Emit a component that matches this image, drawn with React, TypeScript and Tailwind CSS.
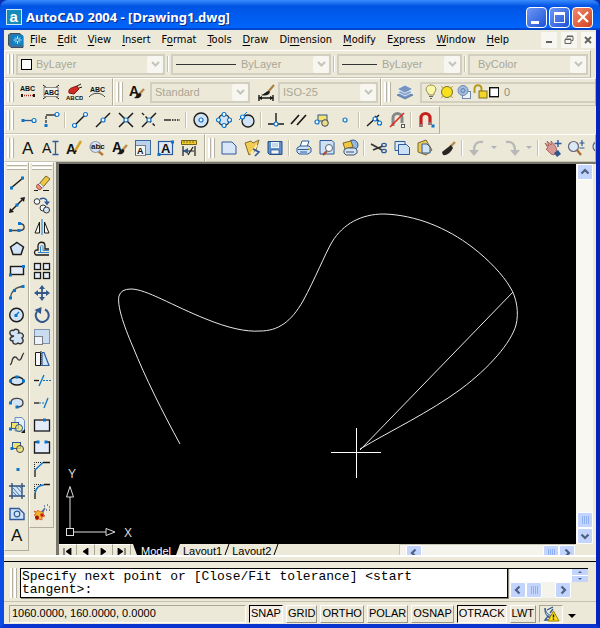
import type { ReactNode } from "react";

const INK = "#1a1a1a";
const BLUE = "#0b74cc";
const NAVY = "#2c5a9a";
const PALE = "#d3e3f6";

const Dot = ({ x, y }: { x: number; y: number }) => (
    <rect x={x - 1.5} y={y - 1.5} width="3" height="3" fill={BLUE} />
);

const Ring = ({ x, y }: { x: number; y: number }) => (
    <circle cx={x} cy={y} r="2" fill="#fff" stroke={BLUE} strokeWidth="1.2" />
);

const Glyph = ({ x, y, size, children, bold = false }: { x: number; y: number; size: number; children: string; bold?: boolean }) => (
    <text x={x} y={y} fontSize={size} fontWeight={bold ? 700 : 400} fill="#111" stroke="none" fontFamily="'Liberation Sans', sans-serif">
        {children}
    </text>
);

const Brush = () => (
    <>
        <path d="M16 6 11.5 11" stroke="#b98a4b" strokeWidth="2.4" />
        <path d="M12 10c-3 0-3 3-6 5 3 1 7 0 7.500-3.500z" fill={INK} stroke="none" />
    </>
);

const Printer = () => (
    <>
        <path d="M5 8 7 2h7l-2 6" fill="#fff" stroke={NAVY} />
        <path d="M2 9l3-2h9l2 2v4l-3 2H4l-2-2z" fill={PALE} stroke={NAVY} />
        <path d="M3 10.500h11M5 13h7" stroke={NAVY} />
        <circle cx="14" cy="10" r=".9" fill="#d8a414" stroke="none" />
    </>
);

const icons: Record<string, ReactNode> = {
    // drawing tools
    Line: <><path d="M3 14 15 4" stroke={INK} strokeWidth="1.5" /><Dot x={3.500} y={14} /><Dot x={14.500} y={4} /></>,
    "Construction line": <><path d="M3 15 15 3" stroke={INK} strokeWidth="1.4" /><path d="m1 17 1-5 4 4zM17 1l-5 1 4 4z" fill={INK} stroke="none" /><Dot x={9} y={9} /></>,
    Polyline: <><path d="M3 12.500h9c5 0 6-6 0-7" stroke="#444" strokeWidth="1.4" /><Dot x={2.500} y={12.500} /><Dot x={11} y={12.500} /><Dot x={11.500} y={5.500} /></>,
    Polygon: <path d="M9 2.500 15.500 7 13 14.500H5L2.500 7z" fill={PALE} stroke={INK} strokeWidth="1.5" />,
    Rectangle: <><rect x="2.500" y="4.500" width="13" height="8" fill="#e3ecf8" stroke={INK} strokeWidth="1.4" /><Dot x={15.500} y={4.500} /><Dot x={2.500} y={13} /></>,
    Arc: <><path d="M2.500 14C3 7 8 3 15 2.500" stroke="#555" strokeWidth="1.4" /><Dot x={2.500} y={14} /><Dot x={6.500} y={6.500} /><Dot x={15} y={2.500} /></>,
    Circle: <><circle cx="8.500" cy="9" r="6.800" fill={PALE} stroke={INK} strokeWidth="1.4" /><path d="m8 9 3-3" stroke={BLUE} strokeWidth="1.3" /><Dot x={8} y={9.500} /></>,
    "Revision cloud": <path d="M6 8C0 8 1 1 5.500 2.500 8 0 12 2 10.500 5c5-1 6 4 3.500 5 3 4-1 7-4 5-2 2-6 1-5-2-4 0-4-4 1-5z" fill={PALE} stroke="#333" strokeWidth="1.4" />,
    Spline: <path d="M2 15c3-1 1-8 5-8 3 0 2 4 5 3 2-1 2-6 4-7" stroke="#333" strokeWidth="1.3" />,
    Ellipse: <><ellipse cx="9" cy="9" rx="6.500" ry="4" fill={PALE} stroke={INK} strokeWidth="1.4" /><Dot x={2.500} y={9} /><Dot x={15.500} y={9} /><Dot x={9} y={5} /></>,
    "Ellipse arc": <><path d="M3 8c1-5 12-5 12 1 0 3-3 4-6 4" fill={PALE} stroke="#444" strokeWidth="1.4" /><Dot x={2.500} y={9} /><Dot x={9} y={13} /></>,
    "Insert block": <><path d="M7 1.500h7l2.500 3V15H7z" fill="#e3eefa" stroke="#6f8fb8" /><rect x="3.500" y="6.500" width="7" height="6" fill="#f3e36b" stroke={NAVY} /><circle cx="11" cy="12" r="3.500" fill="#f3e36b" fillOpacity=".7" stroke={NAVY} /><Dot x={2.500} y={13} /><path d="M17 13v4h-4z" fill={INK} stroke="none" /></>,
    "Make block": <><rect x="4.500" y="4.500" width="8" height="6" fill="#f3e36b" stroke={NAVY} /><circle cx="12" cy="11" r="3.500" fill="#f3e36b" fillOpacity=".7" stroke="#444" /><Dot x={4} y={10.500} /></>,
    Point: <Dot x={10} y={9.500} />,
    Hatch: <><rect x="4" y="4" width="10" height="10" fill={PALE} stroke="none" /><path d="M4 1v16M14 1v16M1 4h16M1 14h16" stroke="#31517e" strokeWidth="1.4" /><path d="m5 6 7 8M5 10l4 4M8 4l6 7M11 4l3 3" stroke={NAVY} strokeWidth=".8" /></>,
    Region: <><path d="M2 4.500h9l5 5v6H2z" fill={PALE} stroke={NAVY} strokeWidth="1.4" /><circle cx="9" cy="10" r="2.800" fill={PALE} stroke={NAVY} strokeWidth="1.200" /></>,
    "Multiline text": <Glyph x={3} y={15} size={17}>A</Glyph>,

    // modify tools
    Erase: <><path d="m6 10 7-8 4 3-7 8z" fill="#efc83f" stroke="#6f6130" /><path d="m7 9 3.500 3.500-1.500 2L5 11z" fill="#eaf1f8" stroke="#778" strokeWidth=".6" /><path d="m5 10 4 4c-1 2-3 2-4 1-2-1-2-4 0-5z" fill="#ee8a79" stroke="#8a3f38" strokeWidth=".8" /><path d="M1 16.500h4M10 16.500h6" stroke={INK} /></>,
    "Copy object": <><circle cx="4" cy="5.500" r="2.800" fill="#f3f6fa" stroke="#333" /><circle cx="10" cy="12" r="3" fill="#f3f6fa" stroke="#333" /><circle cx="13.500" cy="14" r="3" fill={PALE} stroke="#333" /><path d="M7 3c4-2 7 0 7 3" stroke={NAVY} strokeWidth="1.4" /><path d="M11 5.500h6l-3 4z" fill={NAVY} stroke="none" /></>,
    Mirror: <><path d="M9 1v16" stroke="#56a0d8" strokeWidth="1.500" /><path d="M6.500 4v11H2zM11.500 4v11H16z" fill="#f5f5f5" stroke={INK} /></>,
    Offset: <><path d="M16 15H3c-2-1-2-4 0-5h2V6c0-5 7-5 7 0v3h4" stroke={INK} strokeWidth="1.3" /><path d="M16 12.500H5M7.500 12V7c0-2 2.500-2 2.500 0v3.500h6" stroke="#2f86cf" strokeWidth="1" /></>,
    Array: <g fill="#e3ecf8" stroke={INK} strokeWidth="1.3"><rect x="1.500" y="1.500" width="6" height="6" /><rect x="10.500" y="1.500" width="6" height="6" /><rect x="1.500" y="10.500" width="6" height="6" /><rect x="10.500" y="10.500" width="6" height="6" /></g>,
    Move: <><path d="M9 3v12M3 9h12" stroke="#33598c" strokeWidth="1.8" /><path d="m9 1 3 4H6zM9 17l3-4H6zM1 9l4-3v6zM17 9l-4-3v6z" fill="#33598c" stroke="none" /></>,
    Rotate: <><path d="M12 3.500A6.500 6.500 0 1 1 4 5.500" stroke="#33598c" strokeWidth="2" /><path d="m1.500 4 7-3-.5 7z" fill="#33598c" stroke="none" /></>,
    Scale: <><rect x="1.500" y="1.500" width="15" height="14" fill="#c9dcf2" stroke="#8093ad" /><rect x="1.500" y="8.500" width="8" height="8" fill="#edf2fa" stroke={INK} strokeDasharray="1 1" /></>,
    Stretch: <><path d="M2.500 2.500h5v13h-5z" fill="#f4f6f8" stroke={INK} /><path d="M9 2.500h2l5 13H9z" fill={PALE} stroke={NAVY} strokeWidth="1.2" /><path d="M8 1v16" stroke={INK} strokeDasharray="1 1" /></>,
    Trim: <><path d="M1 8.500h5" stroke={INK} strokeWidth="1.3" /><path d="m6 14 5-11" stroke={BLUE} strokeWidth="1.3" /><path d="M10 8.500h8" stroke={BLUE} strokeDasharray="2 1" /></>,
    Extend: <><path d="M1 9h5" stroke={INK} strokeWidth="1.3" /><path d="M6 9h6" stroke={BLUE} strokeDasharray="2 1" /><path d="m11 14 4-10" stroke={BLUE} strokeWidth="1.3" /></>,
    "Break at point": <><rect x="1.500" y="4" width="15" height="11" fill="#e3ecf8" stroke={INK} strokeWidth="1.3" /><Dot x={11.500} y={4} /></>,
    Break: <><path d="M4 4H1.500v11h15V4H14" fill="#e3ecf8" stroke={INK} strokeWidth="1.3" /><Dot x={5} y={4} /><Dot x={13} y={4} /></>,
    Chamfer: <><path d="M1.500 9V2.500H9" stroke={INK} strokeDasharray="1 1" /><path d="M2 17v-7M10 2.500h7" stroke={INK} strokeWidth="1.3" /><path d="m2 10 8-7.500" stroke={BLUE} strokeWidth="1.4" /></>,
    Fillet: <><path d="M1.500 9V2.500H9" stroke={INK} strokeDasharray="1 1" /><path d="M2 17v-6M11 2.500h6" stroke={INK} strokeWidth="1.3" /><path d="M2 11c1-5 4-8 9-8" stroke={BLUE} strokeWidth="1.6" /></>,
    Explode: <><path d="m1 7 3 1 1-2 2 2 4-2-1 4 2 2-3 1v3l-3-1-3 1v-3l-2-2 2-1z" fill="#f4b52a" stroke="#d64b1c" strokeWidth=".7" /><circle cx="4" cy="13.500" r="2" fill="#a01414" stroke="none" /><circle cx="9" cy="11" r="1.800" fill="#c42217" stroke="none" /><path d="m9 8 3-4M11 2h1M14 1h1M16 3h1M13 6h1M16 6h1" stroke="#4b6a96" strokeWidth="1.4" /></>,

    // text and styles
    "Remote text": <><Glyph x={1} y={8} size={7} bold>ABC</Glyph><path d="M3 12.500h12" stroke="#b3302a" strokeWidth="1.500" strokeDasharray="1 1" /><path d="M2 11h2v3H2zM14 11h2v3h-2z" fill={INK} stroke="none" /></>,
    "Text mask": <><path d="m1 2 4 3M17 2l-4 3M1 16l4-3M17 16l-4-3" stroke={INK} /><rect x="2" y="4.500" width="14" height="9" fill="#f3f3ee" stroke="#777" strokeWidth=".8" /><Glyph x={2} y={12} size={7} bold>ABC</Glyph></>,
    "Explode text": <><path d="M4 10c-1-5 3-5 5-6l3-1 2 3-3 3-2 2z" fill="#d22b24" stroke="#7d1512" /><path d="m12 3 4-2M14 5l3-1" stroke={INK} /><Glyph x={1} y={17} size={6} bold>ABCD</Glyph></>,
    "Arc text": <><Glyph x={2} y={9} size={7} bold>ABC</Glyph><path d="M1 14c4-5 12-5 16 0" stroke="#444" /></>,
    "Text style": <><Glyph x={1} y={13} size={14} bold>A</Glyph><Brush /></>,
    "Dimension style": <><path d="M2 12v6M16 12v6M3 15h12" stroke={INK} strokeWidth="1.4" /><path d="m1 15 4-2v4zM17 15l-4-2v4z" fill={INK} stroke="none" /><path d="m17 2-6 7" stroke="#a97b3d" strokeWidth="2" /><path d="M12 8c-3 0-4 3-8 4 3 1 8 1 9-3z" fill={INK} stroke="none" /></>,
    "Layer manager": <><path d="m1 12 8-3 8 3-8 4z" fill="#6d8fbd" stroke="#4c6c99" strokeWidth=".7" /><path d="m1 9 8-3 8 3-8 4z" fill="#86a6d0" stroke="#fff" strokeWidth=".7" /><path d="m1 6 8-4 8 4-8 4z" fill="#7595c0" stroke="#fff" strokeWidth=".7" /></>,

    // object snaps
    "Temporary track point": <><path d="M3 9.500h11" stroke={NAVY} strokeWidth="1.3" /><Dot x={4} y={9.500} /><Ring x={15} y={9.500} /></>,
    "Snap from": <><path d="M14 4H4" stroke={INK} strokeWidth="1.3" /><path d="M4 5v8" stroke={INK} strokeDasharray="3 1" strokeWidth="1.200" /><Ring x={15} y={3.500} /><Dot x={4} y={14.500} /></>,
    Endpoint: <><path d="M4 14 14 4" stroke={INK} strokeWidth="1.500" /><Ring x={3.500} y={14.500} /><Ring x={14.500} y={3.500} /></>,
    Midpoint: <><path d="m2 16 14-14" stroke={INK} strokeWidth="1.500" /><Ring x={9} y={9} /></>,
    Intersection: <><path d="m2 2 14 14M2 16 16 2" stroke={INK} strokeWidth="1.500" /><Ring x={9} y={9} /></>,
    "Apparent intersection": <><path d="M2 16 16 2" stroke={INK} strokeWidth="1.4" /><path d="m2 2 14 14" stroke={INK} strokeWidth="1.4" strokeDasharray="3 2" /><Ring x={9} y={9} /></>,
    Extension: <><path d="M1 9h7" stroke={INK} strokeWidth="1.4" /><path d="M9 9h8" stroke={INK} strokeWidth="1.4" strokeDasharray="1.5 1" /></>,
    Center: <><circle cx="9" cy="9" r="7" fill={PALE} stroke={INK} strokeWidth="1.4" /><Ring x={9} y={9} /></>,
    Quadrant: <><circle cx="9" cy="9" r="5.500" fill={PALE} stroke={INK} strokeWidth="1.2" /><Ring x={9} y={3.500} /><Ring x={3.500} y={9} /><Ring x={14.500} y={9} /><Ring x={9} y={14.500} /></>,
    Tangent: <><path d="M1 9 9 1" stroke={BLUE} /><circle cx="10" cy="10" r="6" fill={PALE} stroke={INK} strokeWidth="1.3" /><Ring x={4.500} y={6} /></>,
    Perpendicular: <><path d="M9 2v10M1 13h16" stroke={INK} strokeWidth="1.4" /><Ring x={9} y={13} /></>,
    Parallel: <path d="M1 13 9 4M7 14l9-10" stroke={INK} strokeWidth="1.700" />,
    Insertion: <><rect x="5" y="4" width="9" height="6" fill="#f3e36b" stroke={NAVY} /><circle cx="12" cy="12" r="3.300" fill="#e6e08a" stroke="#445" /><Ring x={4} y={11} /></>,
    Node: <Ring x={9} y={9} />,
    Nearest: <><path d="m2 15 12-11M10 5l6 9" stroke={INK} strokeWidth="1.4" /><Ring x={10} y={8} /><Ring x={14.500} y={12} /></>,
    "Snap to none": <><path d="M5 15V7c0-6 9-6 9 0v5" stroke="#888" strokeWidth="3" /><path d="M2 16 16 2" stroke="#e02b20" strokeWidth="1.600" /><rect x="13.500" y="13.500" width="3" height="3" fill="#fff" stroke="#555" /></>,
    "Object snap settings": <><path d="M4 16V7c0-6 9-6 9 0v7" stroke="#c4201d" strokeWidth="3.200" /><path d="M2.500 14.500h3.200M11.500 12.500h3.200" stroke="#888" strokeWidth="2.500" /><Dot x={16} y={15} /></>,

    // text toolbar
    "Single line text": <><Glyph x={0} y={14} size={14}>A</Glyph><path d="M10.500 2.500h6M13.500 2.500v13M10.500 15.500h6" stroke={NAVY} strokeWidth="1.300" /></>,
    "Edit text": <><Glyph x={1} y={15} size={14} bold>A</Glyph><path d="m16 2-6 10" stroke="#d2a728" strokeWidth="2.500" /><path d="m10 11-1 4 3-3z" fill={INK} stroke="none" /></>,
    "Find and replace": <><path d="m10 12 5 4" stroke="#b6793a" strokeWidth="2.400" /><circle cx="7.500" cy="8" r="5.500" fill={PALE} stroke="#99a" strokeWidth="1.200" /><Glyph x={3} y={10} size={8} bold>abc</Glyph></>,
    "Scale text": <><rect x="1.500" y="1.500" width="15" height="14" fill="#bad2ec" stroke="#3a689f" /><rect x="1.500" y="6.500" width="10" height="10" fill="#f5f5f0" stroke={INK} strokeDasharray="1 1" /><Glyph x={3} y={15} size={9} bold>A</Glyph></>,
    "Justify text": <><rect x="1.500" y="2.500" width="14" height="13" fill="#dfeaf7" stroke={NAVY} strokeWidth="1.200" /><Glyph x={4} y={14} size={13} bold>A</Glyph><Dot x={2} y={15.500} /><Dot x={15.500} y={3} /></>,
    "Convert distance": <><path d="M1.500 1.500h15v4h-15z" fill="#edc92e" stroke="#76631b" /><path d="M4 2v2M7 2v2M10 2v2M13 2v2" stroke="#6b5816" strokeWidth=".8" /><path d="M3 7v10M15 7v10M3 12h11M13 8l-5 8" stroke={INK} strokeWidth="1.200" /><path d="m3 12 5-3v6z" fill={NAVY} stroke="none" /></>,

    // standard toolbar
    New: <path d="M2 3h10l4 4v8H2z" fill="#d8e6f7" stroke={NAVY} />,
    Open: <><path d="m2 4 6-2 2 2 6-3-3 10-7 5z" fill="#f0cc55" stroke="#806c2f" /><path d="m8 15 6-9" stroke="#fbeeb0" strokeWidth="2" /><path d="m10 10 6 3-4 4" stroke={NAVY} strokeWidth="1.600" /></>,
    Save: <><path d="M2 2.500h14v13H3.500L2 14z" fill="#5f91cc" stroke="#244f88" /><rect x="5" y="3" width="8" height="6" fill="#eef4fb" stroke="none" /><rect x="5" y="11" width="8" height="4" fill="#f4f4f4" stroke="#244f88" strokeWidth=".7" /><path d="M6 5h6M6 7h6" stroke="#9fb9d6" /></>,
    Plot: <Printer />,
    "Plot preview": <><path d="M2 1.500h12l2 2V15H2z" fill="#cfe0f4" stroke={NAVY} /><path d="m9 12-4 4" stroke="#b5482a" strokeWidth="2.200" /><circle cx="11" cy="9" r="3.500" fill="#f3f8fd" stroke="#567" /></>,
    Publish: <><circle cx="12" cy="6" r="5" fill="#8fb8e3" stroke={NAVY} /><path d="m2 4 8-2 2 6-8 2z" fill="#efc83f" stroke="#7d672a" /><path d="m3 11 3-2h8l2 2v3l-3 2H5l-2-2z" fill={PALE} stroke="#456" /><path d="M5 13h8" stroke="#456" /></>,
    Cut: <><path d="m1 5 11 6M3 11l10-4" stroke="#333" strokeWidth="1.500" /><ellipse cx="14" cy="6" rx="2.300" ry="1.700" stroke={NAVY} strokeWidth="1.300" /><ellipse cx="14" cy="12" rx="2.300" ry="1.700" stroke={NAVY} strokeWidth="1.300" /></>,
    Copy: <><path d="M2 2.500h10v9H2z" fill="#dbe8f7" stroke={NAVY} /><path d="M5.500 5.500h8l3 3v7h-11z" fill="#cbdff5" stroke={NAVY} /></>,
    Paste: <><path d="m2 4 8-3 6 10-6 5-8-3z" fill="#edc95b" stroke="#7d672a" /><path d="M6 5h5l3 3v6H6z" fill={PALE} stroke={NAVY} /></>,
    "Match properties": <><path d="m16 3-5 5" stroke="#b98a4b" strokeWidth="2.400" /><path d="m12 6-9 7 1 3c4 1 8-3 10-7z" fill="#2a2522" stroke="none" /></>,
    Undo: <><path d="M15 3C9 2 6 5 6 12" stroke="#b7b8b8" strokeWidth="2.300" /><path d="M1 11h10l-5 6z" fill="#b7b8b8" stroke="none" /></>,
    Redo: <><path d="M3 3c6-1 9 2 9 9" stroke="#b7b8b8" strokeWidth="2.300" /><path d="M7 11h10l-5 6z" fill="#b7b8b8" stroke="none" /></>,
    Pan: <><path d="m1 4 4 3-2-5 4 4V2l5 6 1 5-3 3-3-1-5-5 2-1z" fill="#d99a96" stroke="#9a5450" strokeWidth=".8" /><path d="m10 14 4-3 3 4-4 3z" fill="#2e568f" stroke="none" /><path d="M14 1v7M10.500 4.500h7" stroke={NAVY} strokeWidth="1.400" /></>,
    "Zoom realtime": <><path d="m10 11 4 5" stroke="#b0703c" strokeWidth="2.400" /><circle cx="6.500" cy="7.500" r="5" fill="#dbe9f6" stroke="#667" strokeWidth="1.200" /><path d="M15 1v6M12.500 4h5M12.500 9h5" stroke={NAVY} strokeWidth="1.200" /></>,
    "Zoom window": <><circle cx="8" cy="7.500" r="5" fill="#dbe9f6" stroke="#667" strokeWidth="1.200" /><path d="m11 11 4 5" stroke="#b0703c" strokeWidth="2.400" /></>,
};

const drawTools = ["Line", "Construction line", "Polyline", "Polygon", "Rectangle", "Arc", "Circle", "Revision cloud", "Spline", "Ellipse", "Ellipse arc", "Insert block", "Make block", "Point", "Hatch", "Region", "Multiline text"];
const modifyTools = ["Erase", "Copy object", "Mirror", "Offset", "Array", "Move", "Rotate", "Scale", "Stretch", "Trim", "Extend", "Break at point", "Break", "Chamfer", "Fillet", "Explode"];
const expressTools = ["Remote text", "Text mask", "Explode text", "Arc text"];
const snapTools = ["Temporary track point", "Snap from", "|", "Endpoint", "Midpoint", "Intersection", "Apparent intersection", "Extension", "|", "Center", "Quadrant", "Tangent", "|", "Perpendicular", "Parallel", "Insertion", "Node", "|", "Nearest", "Snap to none", "|", "Object snap settings"];
const textTools = ["Multiline text", "Single line text", "Edit text", "Find and replace", "Text style", "Scale text", "Justify text", "Convert distance"];
const standardTools = ["New", "Open", "Save", "|", "Plot", "Plot preview", "Publish", "|", "Cut", "Copy", "Paste", "Match properties", "|", "Undo", "v", "Redo", "v", "|", "Pan", "Zoom realtime", "Zoom window"];

// [text, index of the underlined access key]
const menus: [string, number][] = [
    ["File", 0], ["Edit", 0], ["View", 0], ["Insert", 0], ["Format", 1], ["Tools", 0],
    ["Draw", 0], ["Dimension", 2], ["Modify", 0], ["Express", 1], ["Window", 0], ["Help", 0],
];

const modes = [
    { name: "SNAP", on: true },
    { name: "GRID", on: false },
    { name: "ORTHO", on: false },
    { name: "POLAR", on: false },
    { name: "OSNAP", on: false },
    { name: "OTRACK", on: true },
    { name: "LWT", on: false },
];

const ToolIcon = ({ name }: { name: string }) => (
    <svg viewBox="0 0 18 18" className="size-[18px] shrink-0" fill="none" aria-hidden="true">{icons[name]}</svg>
);

const Separator = () => (
    <div className="flex w-[6px] shrink-0 justify-center py-1 self-stretch">
        <div className="w-px bg-[#c5c2b2]" />
        <div className="w-px bg-white" />
    </div>
);

const ToolButton = ({ name }: { name: string }) => (
    <button aria-label={name} className="flex h-[22px] w-[23px] shrink-0 items-center justify-center">
        <ToolIcon name={name} />
    </button>
);

const Tools = ({ names }: { names: string[] }) => (
    <>
        {names.map((name, i) => {
            if (name === "|") return <Separator key={i} />;
            if (name === "v") {
                return (
                    <button key={i} aria-label="History" className="flex w-3 shrink-0 justify-center">
                        <svg viewBox="0 0 6 4" className="h-1 w-[6px]"><path d="M0 0h6L3 3z" fill="#a9b2bd" /></svg>
                    </button>
                );
            }
            return <ToolButton key={i} name={name} />;
        })}
    </>
);

const Grip = () => (
    <div className="mr-[2px] flex shrink-0 gap-px self-stretch py-[2px]">
        <div className="w-[3px] border-r border-[#b5b2a2] bg-white" />
        <div className="w-[3px] border-r border-[#b5b2a2] bg-white" />
    </div>
);

const Toolbar = ({ children, className = "" }: { children: ReactNode; className?: string }) => (
    <div className={`flex h-7 items-center overflow-hidden border-t border-r border-b border-l border-t-white border-l-white border-r-[#b0ad9d] border-b-[#c9c6b6] py-px pl-[2px] ${className}`}>
        <Grip />
        {children}
    </div>
);

const Combo = ({ label, value, children, className }: { label: string; value: string; children?: ReactNode; className: string }) => (
    <div className={`flex h-[21px] items-center border-2 border-[#d2cfc0] bg-[#ece9d8] pl-[3px] ${className}`}>
        {children}
        <select aria-label={label} disabled className="min-w-0 flex-1 appearance-none font-['Liberation_Sans',sans-serif] text-[11px] leading-4 text-[#a9a696] opacity-100">
            <option>{value}</option>
        </select>
        <span className="flex h-[17px] w-4 shrink-0 items-center justify-center rounded-xs bg-[#f7f6f0]">
            <svg viewBox="0 0 9 6" className="h-[6px] w-[9px]" fill="none"><path d="m1 1 3.500 3.500L8 1" stroke="#c6c4b6" strokeWidth="2" /></svg>
        </span>
    </div>
);

const chevrons = {
    up: "M1.500 6.500 5 3l3.500 3.500",
    down: "M1.500 3.500 5 7l3.500-3.500",
    left: "M6.500 1.500 3 5l3.500 3.500",
    right: "M3.500 1.500 7 5l-3.500 3.500",
};

const ScrollButton = ({ dir, className = "size-4" }: { dir: keyof typeof chevrons; className?: string }) => (
    <button aria-label={`Scroll ${dir}`} className={`flex shrink-0 items-center justify-center rounded-xs border border-white bg-[#c3d5fd] ${className}`}>
        <svg viewBox="0 0 10 10" className="size-[10px] shrink-0" fill="none"><path d={chevrons[dir]} stroke="#4d6185" strokeWidth="2.200" /></svg>
    </button>
);

const ScrollThumb = () => (
    <div className="flex size-4 shrink-0 items-center justify-center gap-px rounded-xs border border-white bg-[#c3d5fd]">
        <div className="h-2 w-px bg-[#8fb0f5]" />
        <div className="h-2 w-px bg-[#8fb0f5]" />
        <div className="h-2 w-px bg-[#8fb0f5]" />
        <div className="h-2 w-px bg-[#8fb0f5]" />
    </div>
);

const TitleBar = () => (
    <header className="flex h-[30px] items-center rounded-t-lg bg-linear-to-b from-[#3a8cff] via-[#0054e3] via-20% to-[#0066ff] pt-1 pr-[7px] pl-[6px] shadow-[inset_0_-2px_0_#0046cf]">
        <svg viewBox="0 0 16 16" className="size-4" aria-hidden="true">
            <rect x=".5" y=".5" width="15" height="15" fill="#168ab8" stroke="#cfe9f4" />
            <text x="3.500" y="12.500" fontSize="15" fontWeight="700" fill="#fff" fontFamily="'Liberation Sans', sans-serif">a</text>
        </svg>
        <h1 className="ml-1 flex-1 truncate font-['Noto_Sans',sans-serif] text-[13px] leading-5 font-bold text-white [text-shadow:1px_1px_#0a2a8a]">AutoCAD 2004 - [Drawing1.dwg]</h1>
        <div className="flex gap-[2px]">
            <button aria-label="Minimize" className="flex size-[21px] rounded-sm border border-white bg-linear-to-br from-[#6f97f3] to-[#1b50d8]">
                <span className="mt-[13px] ml-1 h-[3px] w-2 bg-white" />
            </button>
            <button aria-label="Maximize" className="flex size-[21px] items-center justify-center rounded-sm border border-white bg-linear-to-br from-[#6f97f3] to-[#1b50d8]">
                <span className="size-[11px] border border-t-[3px] border-white" />
            </button>
            <button aria-label="Close" className="flex size-[21px] items-center justify-center rounded-sm border border-white bg-linear-to-br from-[#f0886a] to-[#d0421a]">
                <svg viewBox="0 0 12 12" className="size-3"><path d="m1 1 10 10M11 1 1 11" stroke="#fff" strokeWidth="2.200" /></svg>
            </button>
        </div>
    </header>
);

const MenuBar = () => (
    <nav className="flex h-5 items-center pr-px pl-1 font-['DejaVu_Sans_Condensed','DejaVu_Sans',sans-serif] text-[11px] text-black">
        <svg viewBox="0 0 16 15" className="mr-[6px] h-[15px] w-4 shrink-0" aria-hidden="true">
            <path d="M2 .5h10l3 3v11H3L.5 12V2z" fill="#3c6f9c" stroke="#385066" />
            <rect x="4" y="2" width="11" height="10" fill="#0f82c4" />
            <path d="M9.500 3v8M5.500 7h8M7 4.500l5 5M12 4.500l-5 5" stroke="#fff" strokeWidth=".8" />
            <rect x="8.500" y="6" width="2" height="2" fill="#0f82c4" />
        </svg>
        <div className="flex flex-1 gap-[11px]">
            {menus.map(([text, key]) => (
                <button key={text} className="leading-4">
                    {text.slice(0, key)}
                    <span className="underline underline-offset-2">{text[key]}</span>
                    {text.slice(key + 1)}
                </button>
            ))}
        </div>
        <div className="flex gap-1">
            <button aria-label="Minimize drawing" className="flex size-4 items-center justify-center bg-[#f7f6f1]"><span className="mt-1 h-[2px] w-[6px] bg-[#62625c]" /></button>
            <button aria-label="Restore drawing" className="flex size-4 items-center justify-center bg-[#f7f6f1]">
                <svg viewBox="0 0 10 10" className="size-[10px]" fill="none"><path d="M3 3V1.500h6v4H7.500M1 4.500h6v4H1zM3 1h6M1 4h6" stroke="#62625c" /></svg>
            </button>
            <button aria-label="Close drawing" className="flex h-4 w-[14px] items-center justify-center bg-[#f7f6f1]">
                <svg viewBox="0 0 8 8" className="size-2"><path d="m1 1 6 6M7 1 1 7" stroke="#62625c" strokeWidth="1.800" /></svg>
            </button>
        </div>
    </nav>
);

const LayerStates = () => (
    <svg viewBox="0 0 74 16" className="h-4 w-[74px] shrink-0" fill="none" aria-hidden="true">
        <path d="M3 9C-1 5 2 1 6 1s7 4 3 8v2H4z" fill="#fbf7a8" stroke="#8c8a58" />
        <path d="M4 12.500h4M5 14.500h2" stroke="#666" />
        <path d="m16 2 12 12M28 2 16 14" stroke="#caa71f" />
        <circle cx="22" cy="8" r="5.500" fill="#f8e11c" stroke="#77712b" />
        <rect x="37.500" y="7.500" width="8" height="7" fill="#eef3f8" stroke="#6d88b0" />
        <circle cx="38" cy="6.500" r="5" fill="#a5bddd" stroke="#6d88b0" />
        <circle cx="38" cy="6.500" r="2" stroke="#5a7db0" />
        <path d="M49.500 9V5c0-5 7-5 7 0v2" stroke="#b59a1d" strokeWidth="2" />
        <rect x="54" y="7" width="8" height="7" fill="#f1d629" stroke="#806f1b" />
        <rect x="64.700" y="3.700" width="9" height="9" fill="#fff" stroke="#111" strokeWidth="1.400" />
    </svg>
);

const SideTools = ({ names, className }: { names: string[]; className: string }) => (
    <div className={`flex w-[25px] flex-col items-center self-start border border-t-white border-l-white border-r-[#b0ad9d] border-b-[#b0ad9d] ${className}`}>
        <div className="flex w-5 flex-col gap-px pb-[2px]">
            <div className="h-[3px] border-b border-[#b5b2a2] bg-white" />
            <div className="h-[3px] border-b border-[#b5b2a2] bg-white" />
        </div>
        {names.map((name) => <ToolButton key={name} name={name} />)}
    </div>
);

const Drawing = () => (
    <svg viewBox="59 164 517 380" preserveAspectRatio="xMinYMin slice" className="block h-full w-full" fill="none" stroke="#e8e8e8" role="img" aria-label="Drawing area">
        <path d="M180 444C163 413 145 377 133 347C123 324 117 305 119 296Q121 289 131 289C146 289 173 306 206 319C228 328 246 332 260 331C278 331 291 322 303 301C315 279 325 254 332 242C343 224 361 214 384 214C416 215 447 228 472 247C489 260 503 275 510 287C517 298 519 313 516 325C511 343 489 368 461 389C430 412 390 431 360 449" />
        <path d="M360 450 513 292" />
        <path d="M331 452.500h50M356.500 428v50" stroke="#fff" shapeRendering="crispEdges" />
        <g stroke="#ddd">
            <rect x="66.500" y="528.500" width="7" height="7" />
            <path d="M70 528v-31M66.500 497h7L70 486.500zM74 532h32M106 528.500v7l9-3.500z" />
        </g>
        <text x="68" y="478" fontSize="12" fill="#ddd" stroke="none" fontFamily="'Liberation Sans', sans-serif">Y</text>
        <text x="124" y="537" fontSize="12" fill="#ddd" stroke="none" fontFamily="'Liberation Sans', sans-serif">X</text>
    </svg>
);

const tabArrows = ["M1 0v7M8 0 3 3.500 8 7z", "M7 0 2 3.500 7 7z", "M2 0l5 3.500L2 7z", "M1 0l5 3.500L1 7zM8 0v7"];

const TabStrip = () => (
    <div className="flex h-[11px] items-start overflow-hidden font-['Liberation_Sans',sans-serif] text-[11px] leading-3 text-black">
        {tabArrows.map((d, i) => (
            <button key={i} aria-label={["First tab", "Previous tab", "Next tab", "Last tab"][i]} className="flex h-4 w-[18px] shrink-0 justify-center border-t border-r border-t-white border-r-[#aaa796] pt-[3px]">
                <svg viewBox="0 0 9 7" className="h-[7px] w-[9px]"><path d={d} fill="#000" stroke="#000" strokeWidth=".8" /></svg>
            </button>
        ))}
        <svg viewBox="0 0 6 11" className="h-[11px] w-[6px] shrink-0"><path d="M2 0h4v11z" fill="#000" /></svg>
        <button className="flex h-4 w-[38px] shrink-0 justify-center bg-black pt-px text-white">Model</button>
        <svg viewBox="0 0 5 11" className="h-[11px] w-[5px] shrink-0"><path d="M0 0h5L1 11H0z" fill="#000" /></svg>
        <button className="shrink-0 pt-px pl-[3px]">Layout1</button>
        <svg viewBox="0 0 8 11" className="h-[11px] w-2 shrink-0 mx-px"><path d="M6 0 2 11" stroke="#000" /></svg>
        <button className="shrink-0 pt-px">Layout2</button>
        <svg viewBox="0 0 8 11" className="h-[11px] w-2 shrink-0 mx-px"><path d="M6 0 2 11" stroke="#000" /></svg>
        <div className="flex-1" />
        <div className="mr-[21px] flex h-4 w-[176px] shrink-0 border-t border-l border-[#c9c6b6] bg-[#f4f3ec] pl-[6px]">
            <ScrollButton dir="left" />
            <div className="flex-1" />
            <ScrollThumb />
            <ScrollButton dir="right" />
        </div>
    </div>
);

const DrawingWindow = () => (
    <section className="flex min-w-0 flex-1 flex-col border-t-2 border-l-[3px] border-[#77766c]">
        <div className="flex min-h-0 flex-1">
            <div className="h-0 min-h-full min-w-0 flex-1 bg-black"><Drawing /></div>
            <div className="mr-[3px] flex w-[17px] flex-col items-end bg-[#f8f7f1]">
                <ScrollButton dir="up" />
                <div className="flex-1" />
                <ScrollThumb />
                <ScrollButton dir="down" />
            </div>
        </div>
        <TabStrip />
    </section>
);

const CommandLine = () => (
    <section className="border-t-2 border-white pt-1">
        <div className="flex border-t-[1px] border-black pt-[6px] pr-2 pb-[3px] pl-[6px]">
            <div className="flex gap-px pr-[3px]">
                <div className="w-[3px] border-r border-[#b5b2a2] bg-white" />
                <div className="w-[3px] border-r border-[#b5b2a2] bg-white" />
            </div>
            <textarea
                aria-label="Command line"
                readOnly
                rows={2}
                defaultValue={"Specify next point or [Close/Fit tolerance] <start\ntangent>:"}
                className="block min-w-0 flex-1 resize-none overflow-hidden border border-black bg-white px-px py-px font-['Liberation_Mono',monospace] text-[13px] leading-[13px] text-black shadow-[1px_1px_0_#8c8a7c]"
            />
            <div className="flex w-20 flex-col border-t border-black pl-[2px]">
                <div className="flex h-[13px] bg-white">
                    <div className="flex-1" />
                    <div className="flex w-4 flex-col gap-px">
                        <button aria-label="Previous line" className="flex flex-1 items-center justify-center bg-[#c3d5fd]"><svg viewBox="0 0 4 2" className="h-[2px] w-1"><path d="m0 2 2-2 2 2z" fill="#4d6185" /></svg></button>
                        <button aria-label="Next line" className="flex flex-1 items-center justify-center bg-[#c3d5fd]"><svg viewBox="0 0 4 2" className="h-[2px] w-1"><path d="m0 0 2 2 2-2z" fill="#4d6185" /></svg></button>
                    </div>
                </div>
                <div className="mr-[17px] flex h-4 bg-[#f4f3ec]">
                    <ScrollButton dir="left" />
                    <ScrollThumb />
                    <div className="flex-1" />
                    <ScrollButton dir="right" />
                </div>
            </div>
        </div>
    </section>
);

const StatusBar = () => (
    <footer className="flex h-[23px] items-center gap-[3px] border-t border-[#c5c2b2] pt-px pl-[5px] font-['Liberation_Sans',sans-serif] text-[11px] leading-[15px] text-black">
        <output className="h-[18px] min-w-0 flex-1 truncate border border-t-[#aaa797] border-r-white border-b-white border-l-[#aaa797] pl-[2px]">1060.0000, 160.0000, 0.0000</output>
        {modes.map((mode) => (
            <button
                key={mode.name}
                aria-pressed={mode.on}
                className={`h-[18px] shrink-0 border px-px ${mode.on ? "border-t-black border-r-white border-b-white border-l-black bg-[#f5efe6]" : "border-t-white border-r-[#98968a] border-b-[#98968a] border-l-white"}`}
            >
                {mode.name}
            </button>
        ))}
        <button aria-label="Communication center" className="flex h-[18px] w-6 shrink-0 items-center justify-center border border-t-[#aaa797] border-r-white border-b-white border-l-[#aaa797]">
            <svg viewBox="0 0 18 16" className="h-4 w-[18px]" fill="none">
                <path d="M3 2c1 5 3 7 8 8-3 3-9 0-8-8z" fill="#b9cfea" stroke="#33598c" />
                <path d="m5 4 6-3M8 7l3-4M3 14l3-4 3 4z" stroke="#33598c" strokeWidth="1.300" />
                <path d="m11.500 5 5.500 10H6z" fill="#ffdf1a" stroke="#9a8205" />
                <path d="M11.500 8.500v3M11.500 12.500v1.300" stroke="#111" strokeWidth="1.400" />
            </svg>
        </button>
        <button aria-label="Status bar menu" className="mr-[18px] flex w-3 shrink-0 items-center justify-center">
            <svg viewBox="0 0 8 4" className="mt-1 h-1 w-2"><path d="M0 0h8L4 4z" fill="#000" /></svg>
        </button>
    </footer>
);

const App = () => (
    <div className="flex min-h-screen flex-col bg-[#0a2fb4]">
        <TitleBar />
        <div className="flex flex-1 flex-col border-r-4 border-b-4 border-l-4 border-t-0 border-r-[#0522bd] border-b-[#0a35cf] border-l-[#0b4be6] bg-[#ece9d8]">
            <MenuBar />
            <div className="flex">
                <Toolbar className="pr-[2px]">
                    <Combo label="Color" value="ByLayer" className="w-[149px]">
                        <span className="mr-1 size-[11px] shrink-0 border border-black bg-white" />
                    </Combo>
                    <Separator />
                    <Combo label="Linetype" value="ByLayer" className="w-[160px]">
                        <span className="mr-[5px] h-px w-[60px] shrink-0 bg-[#333]" />
                    </Combo>
                    <Separator />
                    <Combo label="Lineweight" value="ByLayer" className="w-[125px]">
                        <span className="mr-[5px] h-px w-[35px] shrink-0 bg-[#333]" />
                    </Combo>
                    <Separator />
                    <Combo label="Plot style" value="ByColor" className="w-[120px]">
                        <span className="w-[5px]" />
                    </Combo>
                </Toolbar>
            </div>
            <div className="flex">
                <Toolbar className="shrink-0 pr-1"><Tools names={expressTools} /></Toolbar>
                <Toolbar className="shrink-0 pr-[2px]">
                    <ToolButton name="Text style" />
                    <Combo label="Text style" value="Standard" className="ml-[2px] w-[100px]" />
                    <div className="w-1" />
                    <ToolButton name="Dimension style" />
                    <Combo label="Dimension style" value="ISO-25" className="ml-px w-[100px]" />
                </Toolbar>
                <Toolbar className="min-w-0 flex-1">
                    <ToolButton name="Layer manager" />
                    <div className="ml-1 flex h-[21px] min-w-0 flex-1 items-center border-2 border-r-0 border-[#d2cfc0] pl-[3px]">
                        <LayerStates />
                        <output aria-label="Current layer" className="ml-[5px] font-['Liberation_Sans',sans-serif] text-[11px] text-[#8f8d80]">0</output>
                    </div>
                </Toolbar>
            </div>
            <div className="flex">
                <Toolbar className="pr-[2px]"><Tools names={snapTools} /></Toolbar>
            </div>
            <div className="flex">
                <Toolbar className="shrink-0 pr-1"><Tools names={textTools} /></Toolbar>
                <Toolbar className="min-w-0 flex-1"><Tools names={standardTools} /></Toolbar>
            </div>
            <main className="flex flex-1">
                <SideTools names={drawTools} className="pb-1" />
                <SideTools names={modifyTools} className="mr-[2px] pb-[3px]" />
                <DrawingWindow />
            </main>
            <CommandLine />
            <StatusBar />
        </div>
    </div>
);

export default App;
